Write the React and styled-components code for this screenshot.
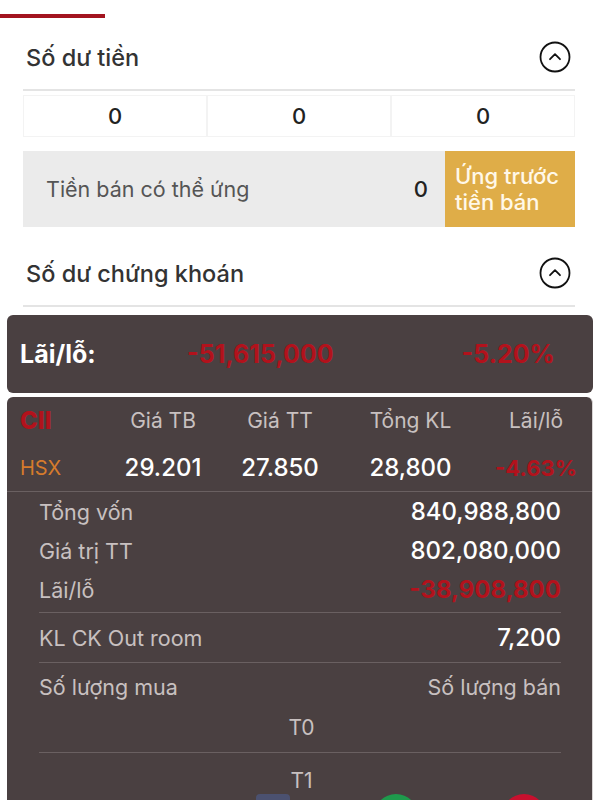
import React from "react";
import styled, { createGlobalStyle } from "styled-components";

const GlobalStyle = createGlobalStyle`
  *, *::before, *::after {
    box-sizing: border-box;
  }
  body {
    margin: 0;
    background: #ffffff;
    font-family: Inter, "Noto Sans", "Liberation Sans", sans-serif;
  }
`;

const balance = ["0", "0", "0"];

const header = ["Giá TB", "Giá TT", "Tổng KL", "Lãi/lỗ"];
const quote = ["29.201", "27.850", "28,800"];

const details = [
  { label: "Tổng vốn", value: "840,988,800" },
  { label: "Giá trị TT", value: "802,080,000" },
  { label: "Lãi/lỗ", value: "-38,908,800", loss: true },
];

const ChevronCircle = () => (
  <svg width="32" height="32" viewBox="0 0 32 32" fill="none">
    <circle cx="16" cy="16" r="14.5" stroke="#111" strokeWidth="1.8" />
    <path
      d="M11 18.2 L16 13.2 L21 18.2"
      stroke="#111"
      strokeWidth="1.8"
      strokeLinecap="round"
      strokeLinejoin="round"
    />
  </svg>
);

const App = () => {
  return (
    <>
      <GlobalStyle />
      <Page>
        <TabMark />
        <Section>
          <SectionHeader $top={7}>
            <Title>Số dư tiền</Title>
            <ChevronCircle />
          </SectionHeader>
          <ZeroRow>
            {balance.map((v, i) => (
              <ZeroCell key={i}>{v}</ZeroCell>
            ))}
          </ZeroRow>
          <AdvanceBox>
            <AdvanceInfo>
              <span>Tiền bán có thể ứng</span>
              <AdvanceAmount>0</AdvanceAmount>
            </AdvanceInfo>
            <AdvanceButton>
              Ứng trước
              <br />
              tiền bán
            </AdvanceButton>
          </AdvanceBox>
          <SectionHeader $top={14}>
            <Title>Số dư chứng khoán</Title>
            <ChevronCircle />
          </SectionHeader>
        </Section>

        <Portfolio>
          <SummaryCard>
            <SummaryLabel>Lãi/lỗ:</SummaryLabel>
            <SummaryValue>-51,615,000</SummaryValue>
            <SummaryValue>-5.20%</SummaryValue>
          </SummaryCard>

          <StockCard>
            <StockGrid>
              <Ticker>CII</Ticker>
              {header.map((h) => (
                <HeadCell key={h}>{h}</HeadCell>
              ))}
              <Exchange>HSX</Exchange>
              {quote.map((q) => (
                <ValueCell key={q}>{q}</ValueCell>
              ))}
              <ValueCell $loss>-4.63%</ValueCell>
            </StockGrid>

            <Details>
              <DetailGroup>
                {details.map((d) => (
                  <DetailRow key={d.label}>
                    <DetailLabel>{d.label}</DetailLabel>
                    <DetailValue $loss={d.loss}>{d.value}</DetailValue>
                  </DetailRow>
                ))}
              </DetailGroup>
              <OutRoomRow>
                <DetailLabel>KL CK Out room</DetailLabel>
                <DetailValue>7,200</DetailValue>
              </OutRoomRow>
              <TradeRow>
                <DetailLabel>Số lượng mua</DetailLabel>
                <DetailLabel>Số lượng bán</DetailLabel>
              </TradeRow>
              <SettleRow $bordered>T0</SettleRow>
              <SettleRow>T1</SettleRow>
            </Details>

            <ActionBar>
              <ActionDot $color="#4b5170" $square />
              <ActionDot $color="#1e9a4c" />
              <ActionDot $color="#c8102e" />
            </ActionBar>
          </StockCard>
        </Portfolio>
      </Page>
    </>
  );
};

export default App;

const Page = styled.div`
  width: 600px;
  height: 800px;
  overflow: hidden;
  background: #ffffff;
`;

const TabMark = styled.div`
  width: 105px;
  height: 4px;
  margin-top: 14px;
  background: #a3141f;
`;

const Section = styled.div`
  padding: 0 25px 0 23px;
`;

const SectionHeader = styled.div`
  display: flex;
  align-items: center;
  justify-content: space-between;
  height: 66px;
  margin-top: ${(p) => p.$top}px;
  padding: 0 4px 0 3px;
  border-bottom: 2px solid #e4e4e4;
`;

const Title = styled.div`
  font-size: 23.5px;
  font-weight: 500;
  color: #333333;
`;

const ZeroRow = styled.div`
  display: grid;
  grid-template-columns: repeat(3, 1fr);
  margin-top: 4px;
`;

const ZeroCell = styled.div`
  height: 42px;
  display: flex;
  align-items: center;
  justify-content: center;
  border: 1px solid #f3f3f3;
  font-size: 22px;
  font-weight: 500;
  color: #222222;
`;

const AdvanceBox = styled.div`
  display: flex;
  height: 76px;
  margin-top: 14px;
`;

const AdvanceInfo = styled.div`
  flex: 1;
  display: flex;
  align-items: center;
  justify-content: space-between;
  padding: 0 17px 0 23px;
  background: #ebebeb;
  font-size: 21.5px;
  color: #555555;
`;

const AdvanceAmount = styled.span`
  font-size: 22px;
  font-weight: 500;
  color: #222222;
`;

const AdvanceButton = styled.div`
  width: 130px;
  padding-left: 10px;
  display: flex;
  flex-direction: column;
  justify-content: center;
  background: #dfad48;
  color: #fff8e8;
  font-size: 22px;
  font-weight: 500;
  line-height: 26px;
`;

const Portfolio = styled.div`
  margin: 8px 7px 0;
  display: flex;
  flex-direction: column;
  gap: 4px;
`;

const SummaryCard = styled.div`
  display: grid;
  grid-template-columns: 167px 1fr auto;
  align-items: center;
  height: 78px;
  padding: 0 38px 0 13px;
  border-radius: 6px;
  background: #4a4041;
`;

const SummaryLabel = styled.div`
  font-size: 25px;
  font-weight: 700;
  color: #ffffff;
`;

const SummaryValue = styled.div`
  font-size: 25px;
  font-weight: 700;
  color: #b2121c;
`;

const StockCard = styled.div`
  border-radius: 6px 6px 0 0;
  background: #4a4041;
  border-right: 1px solid #d8d4d4;
`;

const StockGrid = styled.div`
  display: grid;
  grid-template-columns: 87px 112px 122px 139px 1fr;
  grid-auto-rows: 47px;
  align-items: center;
  padding-left: 13px;
  border-bottom: 1px solid #6a6061;
`;

const Ticker = styled.div`
  font-size: 24px;
  font-weight: 800;
  color: #b2121c;
`;

const Exchange = styled.div`
  font-size: 20px;
  color: #d67b2c;
`;

const HeadCell = styled.div`
  text-align: center;
  font-size: 21px;
  color: #c8c0c0;
`;

const ValueCell = styled.div`
  text-align: center;
  font-size: ${(p) => (p.$loss ? "22px" : "24px")};
  font-weight: ${(p) => (p.$loss ? 700 : 500)};
  color: ${(p) => (p.$loss ? "#b2121c" : "#ffffff")};
`;

const Details = styled.div`
  padding: 0 31px 0 32px;
`;

const DetailGroup = styled.div`
  padding-bottom: 3px;
  border-bottom: 1px solid #6a6061;
`;

const DetailRow = styled.div`
  display: flex;
  align-items: center;
  justify-content: space-between;
  height: 39px;
`;

const OutRoomRow = styled(DetailRow)`
  height: 50px;
  border-bottom: 1px solid #6a6061;
`;

const TradeRow = styled(DetailRow)`
  height: 48px;
`;

const DetailLabel = styled.span`
  font-size: 21.5px;
  color: #c8c0c0;
`;

const DetailValue = styled.span`
  font-size: 24px;
  font-weight: ${(p) => (p.$loss ? 700 : 500)};
  color: ${(p) => (p.$loss ? "#b2121c" : "#ffffff")};
`;

const SettleRow = styled.div`
  height: ${(p) => (p.$bordered ? "42px" : "41px")};
  padding: ${(p) => (p.$bordered ? "0" : "11px")} 0 0 3px;
  display: flex;
  align-items: flex-start;
  justify-content: center;
  font-size: 21px;
  line-height: 34px;
  color: #c8c0c0;
  ${(p) => p.$bordered && "border-bottom: 1px solid #6a6061;"}
`;

const ActionBar = styled.div`
  display: flex;
  align-items: flex-start;
  height: 50px;
  padding-left: 249px;
  gap: 84px;
`;

const ActionDot = styled.div`
  width: ${(p) => (p.$square ? "34px" : "44px")};
  height: 44px;
  border-radius: ${(p) => (p.$square ? "4px" : "50%")};
  background: ${(p) => p.$color};
`;
